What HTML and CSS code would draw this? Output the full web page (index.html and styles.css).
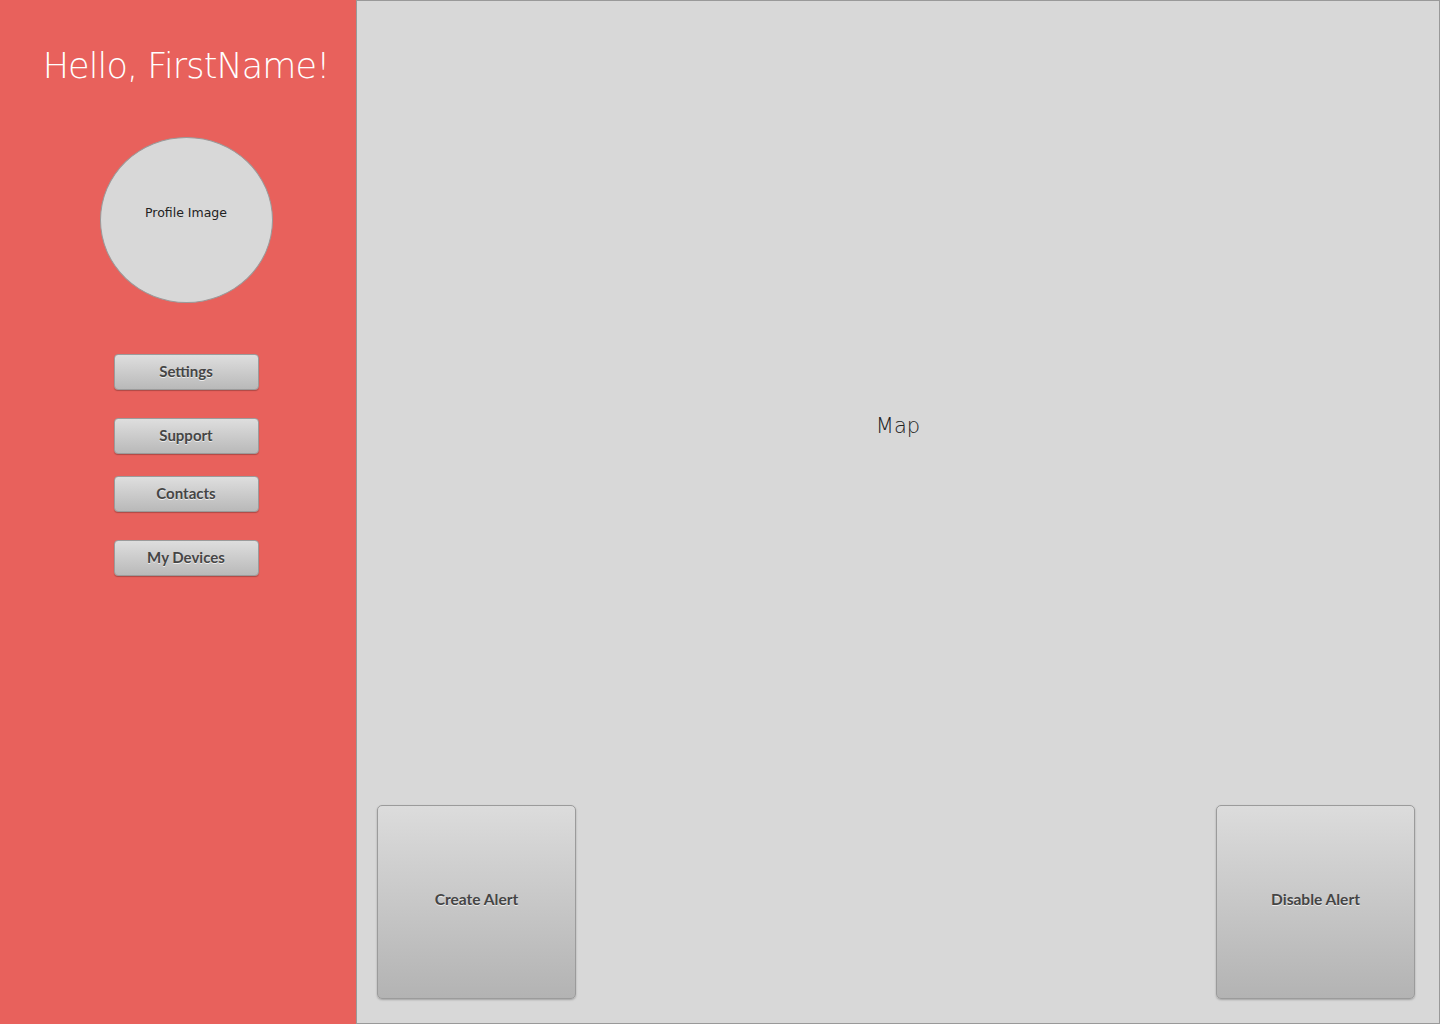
FILE: index.html
```html
<!DOCTYPE html>
<html>
<head>
<meta charset="utf-8">
<link rel="stylesheet" href="styles.css">
</head>
<body>
<div class="app">
  <aside class="sidebar">
    <h1 class="greeting">Hello, FirstName!</h1>
    <div class="avatar"><span>Profile Image</span></div>
    <nav class="menu">
      <button class="btn btn-settings">Settings</button>
      <button class="btn btn-support">Support</button>
      <button class="btn btn-contacts">Contacts</button>
      <button class="btn btn-devices">My Devices</button>
    </nav>
  </aside>
  <main class="map">
    <div class="map-area"><span class="map-label">Map</span></div>
    <div class="actions">
      <button class="big-btn">Create Alert</button>
      <button class="big-btn">Disable Alert</button>
    </div>
  </main>
</div>
</body>
</html>
```
FILE: styles.css
```css
* { box-sizing: border-box; }
html, body { margin: 0; padding: 0; }
body {
  width: 1440px;
  height: 1024px;
  overflow: hidden;
  font-family: "Lato", "DejaVu Sans", sans-serif;
  background: #d8d8d8;
}
.app {
  display: flex;
  height: 1024px;
}
.sidebar {
  width: 356px;
  flex: none;
  background: #e8615c;
  display: flex;
  flex-direction: column;
  align-items: center;
  padding-left: 16px;
}
.greeting {
  margin: 43px 0 0 0;
  font-family: "DejaVu Sans", sans-serif;
  font-weight: 200;
  font-size: 35px;
  line-height: 46px;
  color: #ffffff;
  letter-spacing: -0.9px;
  white-space: nowrap;
}
.avatar {
  margin-top: 48px;
  width: 173px;
  height: 166px;
  border-radius: 50%;
  background: #d8d8d8;
  border: 1px solid #9a9a9a;
  display: flex;
  justify-content: center;
  padding-top: 67px;
  font-family: "DejaVu Sans", sans-serif;
  font-size: 12.5px;
  color: #222;
}
.menu {
  margin-top: 51px;
  display: flex;
  flex-direction: column;
  align-items: center;
}
.btn {
  width: 145px;
  height: 36px;
  border: 1px solid #9b9b9b;
  border-radius: 4px;
  background: linear-gradient(#dedede, #b9b9b9);
  box-shadow: 0 1px 1px rgba(0,0,0,0.25);
  font-family: "Lato", sans-serif;
  font-weight: bold;
  font-size: 15px;
  color: #454545;
  text-shadow: 0 1px 0 rgba(255,255,255,0.7);
  padding: 0 0 3px 0;
}
.btn-support { margin-top: 28px; }
.btn-contacts { margin-top: 22px; }
.btn-devices { margin-top: 28px; }
.map {
  flex: 1;
  border: 1px solid #999;
  background: #d8d8d8;
  display: flex;
  flex-direction: column;
}
.map-area {
  flex: 1;
  display: flex;
  align-items: center;
  justify-content: center;
  padding-top: 46px;
}
.map-label {
  font-family: "DejaVu Sans", sans-serif;
  font-size: 21px;
  color: #222;
  font-weight: 300;
}
.actions {
  display: flex;
  justify-content: space-between;
  padding: 0 24px 24px 20px;
}
.big-btn {
  width: 199px;
  height: 194px;
  border: 1px solid #9b9b9b;
  border-radius: 5px;
  background: linear-gradient(#dcdcdc, #b3b3b3);
  box-shadow: 0 1px 2px rgba(0,0,0,0.25);
  font-family: "Lato", sans-serif;
  font-weight: bold;
  font-size: 15.5px;
  color: #454545;
  text-shadow: 0 1px 0 rgba(255,255,255,0.7);
  padding: 0 0 7px 0;
}
```
